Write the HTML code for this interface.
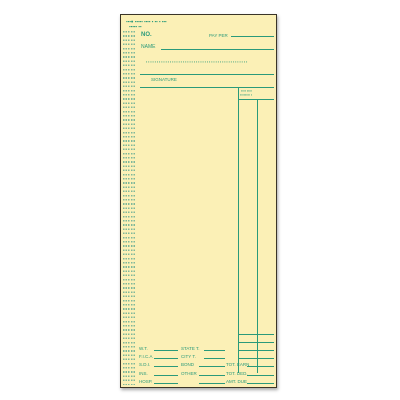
<!DOCTYPE html><html><head><style>
body{margin:0;width:400px;height:400px;background:#fff;position:relative;overflow:hidden;font-family:"Liberation Sans",sans-serif}
.card{position:absolute;left:120px;top:14px;width:155px;height:372px;background:#fbf0b6;border:1px solid #3a3528;box-shadow:1px 2px 3px rgba(0,0,0,.35)}
.l{position:absolute;background:#2a9a7a;height:1.3px}
.v{position:absolute;background:#2a9a7a;width:1.3px}
.t{position:absolute;color:#2a9a7a;font-size:4.5px;white-space:nowrap;line-height:5px}
.nums{position:absolute;left:2px;top:16px;width:13px;height:354px;background:repeating-linear-gradient(to bottom,#7fb89a 0,#7fb89a 1.6px,transparent 1.6px,transparent 4.2px);-webkit-mask:repeating-linear-gradient(to right,#000 0,#000 1.5px,transparent 1.5px,transparent 2.6px)}
</style></head><body>
<div class="card">
<div class="t" style="left:5px;top:4px">▪▪▪● ▪▪▪▪▪ ▪▪▪▪ ▪ ▪▪ ▪ ▪▪▪</div>
<div class="t" style="left:8px;top:9px">▪▪▪▪▪ ▪▪</div>
<div class="nums"></div>
<div class="t" style="left:20px;top:18px;font-weight:bold;font-size:6px">NO.</div>
<div class="t" style="left:88px;top:18px">PAY PER</div>
<div class="l" style="left:110px;top:21px;width:43px"></div>
<div class="t" style="left:20px;top:30px;font-size:5px">NAME</div>
<div class="l" style="left:40px;top:34px;width:113px"></div>
<div class="t" style="left:25px;top:45px;font-size:3.6px;letter-spacing:.9px">▪▪▪▪▪▪▪▪▪▪▪▪▪▪▪▪▪▪▪▪▪▪▪▪▪▪▪▪▪▪▪▪▪▪▪▪▪▪▪▪▪▪▪▪▪▪▪</div>
<div class="l" style="left:19px;top:59px;width:134px"></div>
<div class="t" style="left:30px;top:62px">SIGNATURE</div>
<div class="l" style="left:19px;top:72px;width:134px"></div>
<div class="v" style="left:117px;top:72px;height:286px"></div>
<div class="v" style="left:136px;top:84px;height:274px"></div>
<div class="t" style="left:120px;top:74px;font-size:3.5px">▪▪▪▪ ▪▪▪▪</div>
<div class="t" style="left:119px;top:78px;font-size:3.5px">▪▪▪▪▪▪▪▪ ▪</div>
<div class="l" style="left:117px;top:84px;width:36px"></div>
<div class="l" style="left:117px;top:319px;width:36px"></div>
<div class="l" style="left:117px;top:327px;width:36px"></div>
<div class="l" style="left:117px;top:335px;width:36px"></div>
<div class="l" style="left:117px;top:343px;width:36px"></div>
<div class="t" style="left:18px;top:331px">W.T.</div><div class="l" style="left:33px;top:335px;width:24px"></div>
<div class="t" style="left:60px;top:331px">STATE T.</div><div class="l" style="left:83px;top:335px;width:21px"></div>
<div class="t" style="left:18px;top:339px">F.I.C.A</div><div class="l" style="left:33px;top:343px;width:24px"></div>
<div class="t" style="left:60px;top:339px">CITY T.</div><div class="l" style="left:83px;top:343px;width:21px"></div>
<div class="t" style="left:18px;top:347px">S.D.I.</div><div class="l" style="left:33px;top:351px;width:24px"></div>
<div class="t" style="left:60px;top:347px">BOND</div><div class="l" style="left:78px;top:351px;width:26px"></div>
<div class="t" style="left:105px;top:347px">TOT. EARN</div><div class="l" style="left:126px;top:351px;width:27px"></div>
<div class="t" style="left:18px;top:356px">INS.</div><div class="l" style="left:33px;top:360px;width:24px"></div>
<div class="t" style="left:60px;top:356px">OTHER</div><div class="l" style="left:78px;top:360px;width:26px"></div>
<div class="t" style="left:105px;top:356px">TOT. DED.</div><div class="l" style="left:126px;top:360px;width:27px"></div>
<div class="t" style="left:18px;top:364px">HOSP.</div><div class="l" style="left:33px;top:368px;width:24px"></div>
<div class="l" style="left:78px;top:368px;width:26px"></div>
<div class="t" style="left:105px;top:364px">AMT. DUE</div><div class="l" style="left:126px;top:368px;width:27px"></div>
</div>
</body></html>
